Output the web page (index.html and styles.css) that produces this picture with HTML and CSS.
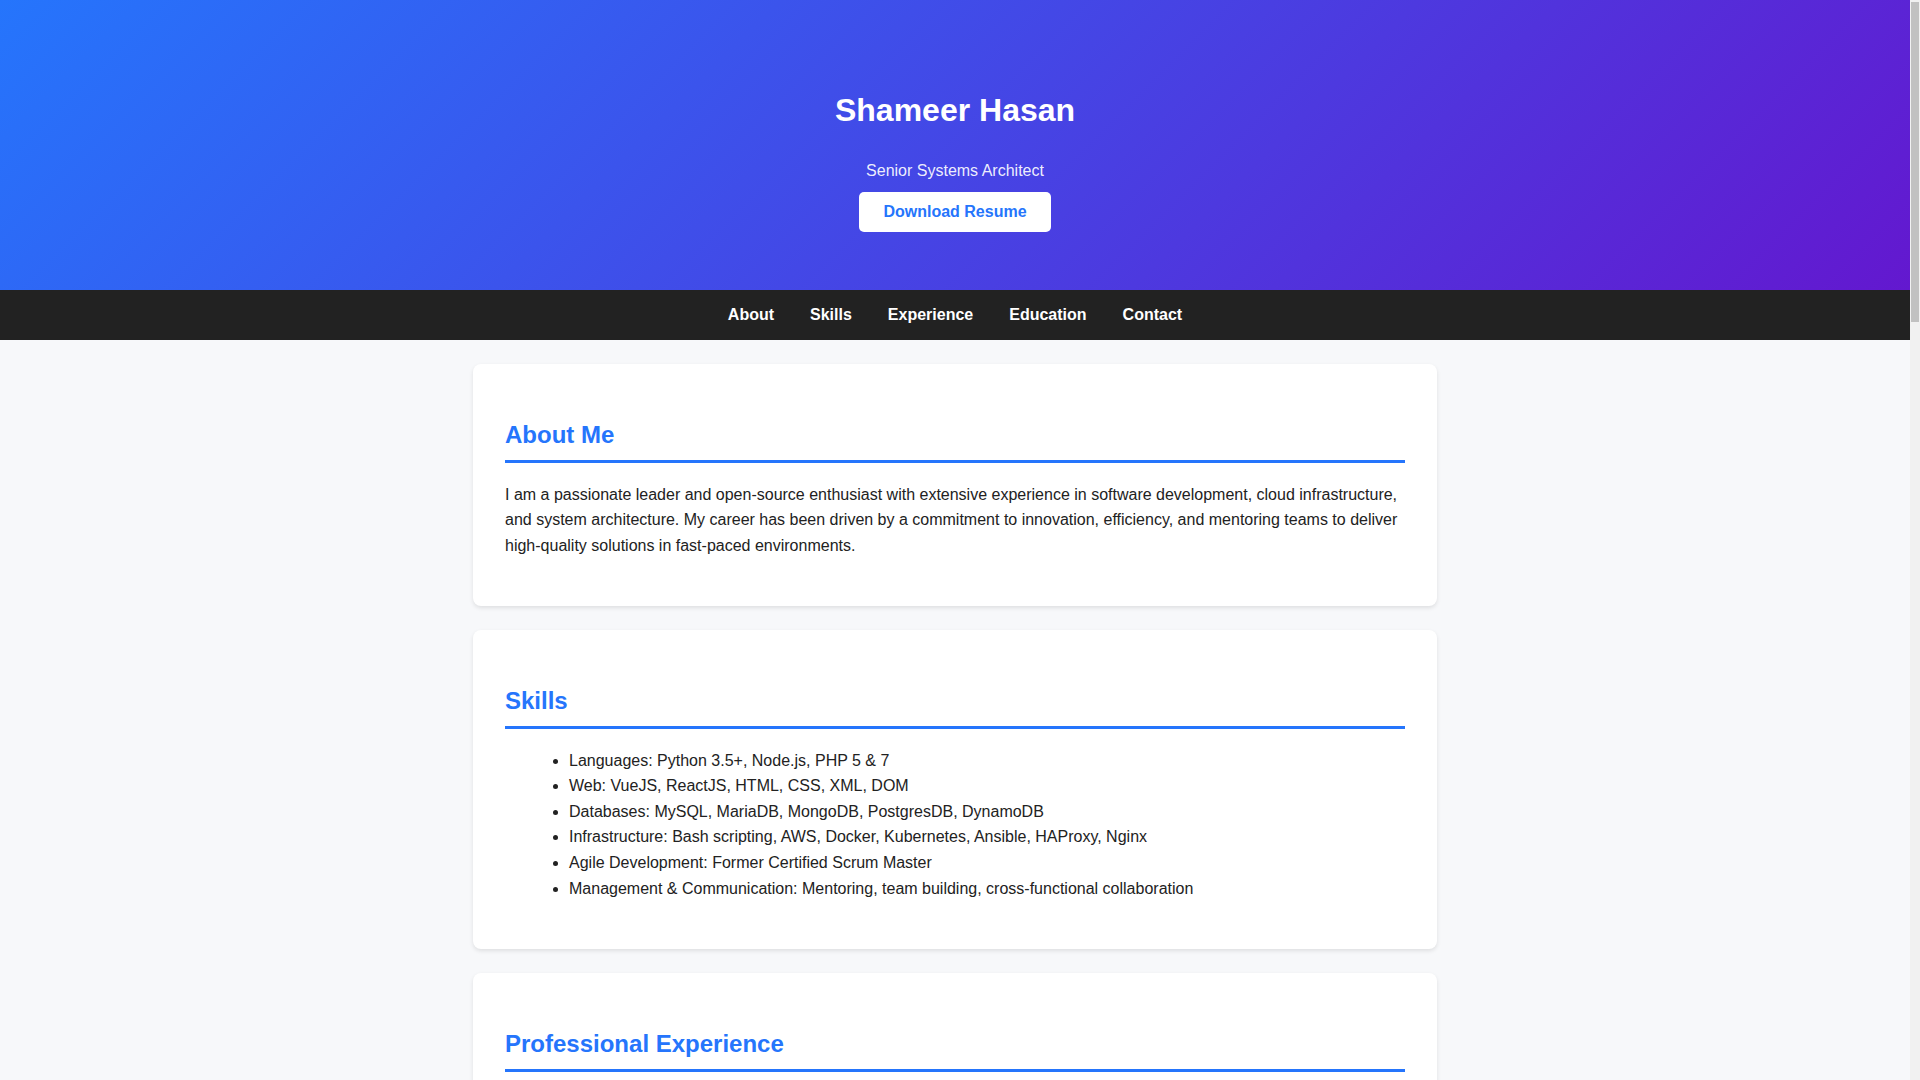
FILE: index.html
```html
<!DOCTYPE html>
<html lang="en">
<head>
<meta charset="utf-8">
<title>Shameer Hasan - Resume</title>
<link rel="stylesheet" href="styles.css">
</head>
<body>
<header class="hero">
  <h1 class="hero-name">Shameer Hasan</h1>
  <p class="hero-role">Senior Systems Architect</p>
  <a class="hero-btn" href="#">Download Resume</a>
</header>
<nav class="topnav">
  <a href="#about">About</a>
  <a href="#skills">Skills</a>
  <a href="#experience">Experience</a>
  <a href="#education">Education</a>
  <a href="#contact">Contact</a>
</nav>
<main class="content">
  <section class="card" id="about">
    <h2 class="card-title">About Me</h2>
    <p>I am a passionate leader and open-source enthusiast with extensive experience in software development, cloud infrastructure, and system architecture. My career has been driven by a commitment to innovation, efficiency, and mentoring teams to deliver high-quality solutions in fast-paced environments.</p>
  </section>
  <section class="card" id="skills">
    <h2 class="card-title">Skills</h2>
    <ul class="skill-list">
      <li>Languages: Python 3.5+, Node.js, PHP 5 &amp; 7</li>
      <li>Web: VueJS, ReactJS, HTML, CSS, XML, DOM</li>
      <li>Databases: MySQL, MariaDB, MongoDB, PostgresDB, DynamoDB</li>
      <li>Infrastructure: Bash scripting, AWS, Docker, Kubernetes, Ansible, HAProxy, Nginx</li>
      <li>Agile Development: Former Certified Scrum Master</li>
      <li>Management &amp; Communication: Mentoring, team building, cross-functional collaboration</li>
    </ul>
  </section>
  <section class="card" id="experience">
    <h2 class="card-title">Professional Experience</h2>
    <h3>Senior Systems Architect</h3>
    <p>Designing scalable cloud infrastructure and leading engineering teams across multiple product lines.</p>
    <h3>Lead Software Engineer</h3>
    <p>Built and maintained web platforms, APIs and deployment pipelines.</p>
  </section>
  <section class="card" id="education">
    <h2 class="card-title">Education</h2>
    <p>Bachelor of Science in Computer Science</p>
  </section>
  <section class="card" id="contact">
    <h2 class="card-title">Contact</h2>
    <p>Email: shameer@example.com</p>
  </section>
</main>
</body>
</html>
```
FILE: styles.css
```css
html {
  margin: 0;
  padding: 0;
  background:
    linear-gradient(#c1c1c1, #c1c1c1) right 1px top 2px / 8px 320px no-repeat,
    #f1f1f1;
}
body {
  margin: 0 10px 0 0;
  padding: 0;
  font-family: "Liberation Sans", Arial, sans-serif;
  font-size: 16px;
  line-height: 1.6;
  color: #222;
  background: #f7f8fa;
}
.hero {
  background: linear-gradient(135deg, #2575fc, #6318cf);
  color: #fff;
  text-align: center;
  padding: 64px 20px 58px;
  display: flex;
  flex-direction: column;
  align-items: center;
}
.hero-name {
  font-size: 32px;
  font-weight: bold;
  margin: 21px 0 22px;
}
.hero-role {
  margin: 0 0 8px;
  color: rgba(255, 255, 255, 0.92);
}
.hero-btn {
  display: block;
  background: #fff;
  color: #2575fc;
  font-weight: bold;
  text-decoration: none;
  padding: 11px 24px;
  line-height: 18px;
  border-radius: 5px;
}
.topnav {
  background: #222;
  height: 50px;
  display: flex;
  justify-content: center;
  align-items: center;
  gap: 36px;
}
.topnav a {
  color: #fff;
  font-weight: bold;
  text-decoration: none;
}
.content {
  max-width: 964px;
  margin: 0 auto;
  padding: 24px 0 24px;
}
.card {
  background: #fff;
  border-radius: 8px;
  padding: 32px;
  margin-bottom: 24px;
  box-shadow: 0 2px 4px rgba(0, 0, 0, 0.1);
}
.card-title {
  font-size: 24px;
  color: #2575fc;
  margin: 19.92px 0 18.5px;
  padding-bottom: 6px;
  border-bottom: 3px solid #2575fc;
}
.card p {
  margin: 16px 0 15.5px;
}
.card-title + p,
.card-title + ul {
  margin-top: 0;
}
.skill-list {
  margin: 0 0 15.5px;
  padding-left: 64px;
}
.card h3 {
  font-size: 18px;
  margin: 16px 0 4px;
}
```
